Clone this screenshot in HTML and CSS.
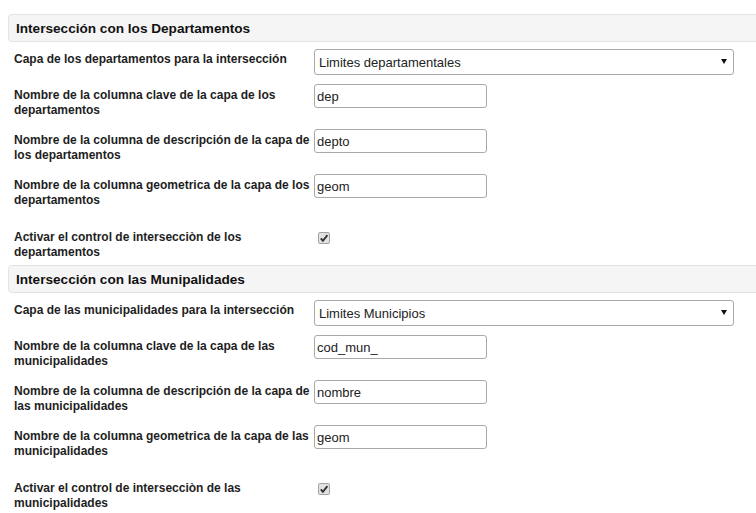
FILE: index.html
```html
<!DOCTYPE html>
<html lang="es">
<head>
<meta charset="utf-8">
<title>Intersección</title>
<link rel="stylesheet" href="styles.css">
</head>
<body>
<div class="container">
  <section class="section">
    <div class="panel-heading">Intersección con los Departamentos</div>
    <div class="field field-select">
      <label class="field-label">Capa de los departamentos para la intersección</label>
      <span class="select-wrap"><select class="select"><option>Limites departamentales</option></select></span>
    </div>
    <div class="field field-text">
      <label class="field-label">Nombre de la columna clave de la capa de los departamentos</label>
      <input class="text-input" type="text" value="dep">
    </div>
    <div class="field field-text">
      <label class="field-label">Nombre de la columna de descripción de la capa de los departamentos</label>
      <input class="text-input" type="text" value="depto">
    </div>
    <div class="field field-text">
      <label class="field-label">Nombre de la columna geometrica de la capa de los departamentos</label>
      <input class="text-input" type="text" value="geom">
    </div>
    <div class="field field-check">
      <label class="field-label">Activar el control de intersecciòn de los departamentos</label>
      <span class="checkbox" role="checkbox" aria-checked="true"><svg width="12" height="12" viewBox="0 0 12 12"><rect x="0.5" y="0.5" width="11" height="11" rx="1.5" fill="#e2e2e2" stroke="#a3a3a3"/><path d="M2.8 6.4 L4.9 8.8 L9.4 3.2" fill="none" stroke="#333" stroke-width="1.9"/></svg></span>
    </div>
  </section>
  <section class="section">
    <div class="panel-heading">Intersección con las Munipalidades</div>
    <div class="field field-select">
      <label class="field-label">Capa de las municipalidades para la intersección</label>
      <span class="select-wrap"><select class="select"><option>Limites Municipios</option></select></span>
    </div>
    <div class="field field-text">
      <label class="field-label">Nombre de la columna clave de la capa de las municipalidades</label>
      <input class="text-input" type="text" value="cod_mun_">
    </div>
    <div class="field field-text">
      <label class="field-label">Nombre de la columna de descripción de la capa de las municipalidades</label>
      <input class="text-input" type="text" value="nombre">
    </div>
    <div class="field field-text">
      <label class="field-label">Nombre de la columna geometrica de la capa de las municipalidades</label>
      <input class="text-input" type="text" value="geom">
    </div>
    <div class="field field-check">
      <label class="field-label">Activar el control de intersecciòn de las municipalidades</label>
      <span class="checkbox" role="checkbox" aria-checked="true"><svg width="12" height="12" viewBox="0 0 12 12"><rect x="0.5" y="0.5" width="11" height="11" rx="1.5" fill="#e2e2e2" stroke="#a3a3a3"/><path d="M2.8 6.4 L4.9 8.8 L9.4 3.2" fill="none" stroke="#333" stroke-width="1.9"/></svg></span>
    </div>
  </section>
</div>
</body>
</html>
```
FILE: styles.css
```css
html, body {
  margin: 0;
  padding: 0;
  background: #fff;
  overflow: hidden;
}
body {
  font-family: "Liberation Sans", Arial, sans-serif;
  color: #222;
}
.container {
  padding: 14px 0 0 8px;
}
.panel-heading {
  box-sizing: border-box;
  height: 28px;
  margin-right: -12px;
  padding: 2px 0 0 7px;
  background: #f5f5f5;
  border: 1px solid #e3e3e3;
  border-radius: 4px 0 0 4px;
  font-weight: bold;
  font-size: 13.6px;
  line-height: 24px;
  color: #111;
}
.field {
  display: flex;
  align-items: flex-start;
  padding-left: 6px;
  box-sizing: border-box;
}
.field-label {
  flex: 0 0 298px;
  margin-right: 2px;
  font-weight: bold;
  font-size: 12px;
  line-height: 15px;
  color: #1e1e1e;
}
.field-select {
  margin-top: 7px;
  height: 35px;
}
.field-select .field-label {
  margin-top: 3px;
}
.field-text {
  height: 45px;
}
.field-text .field-label {
  margin-top: 4px;
}
.field-check {
  height: 46px;
  padding-top: 11px;
}
.select-wrap {
  position: relative;
  display: block;
}
.select-wrap::after {
  content: "";
  position: absolute;
  right: 7px;
  top: 10px;
  border-left: 3px solid transparent;
  border-right: 3px solid transparent;
  border-top: 5px solid #111;
}
.select {
  -webkit-appearance: none;
  appearance: none;
  box-sizing: border-box;
  width: 420px;
  height: 26px;
  margin: 0;
  padding: 0 4px;
  border: 1px solid #a9a9a9;
  border-radius: 3px;
  background: #fff;
  font-family: "Liberation Sans", Arial, sans-serif;
  font-size: 13px;
  color: #222;
}
.text-input {
  box-sizing: border-box;
  width: 173px;
  height: 24px;
  margin: 0;
  padding: 0 2px;
  border: 1px solid #a9a9a9;
  border-radius: 3px;
  background: #fff;
  font-family: "Liberation Sans", Arial, sans-serif;
  font-size: 13px;
  color: #222;
}
.checkbox {
  display: block;
  width: 12px;
  height: 12px;
  margin: 2px 0 0 4px;
}
.checkbox svg {
  display: block;
}
```
